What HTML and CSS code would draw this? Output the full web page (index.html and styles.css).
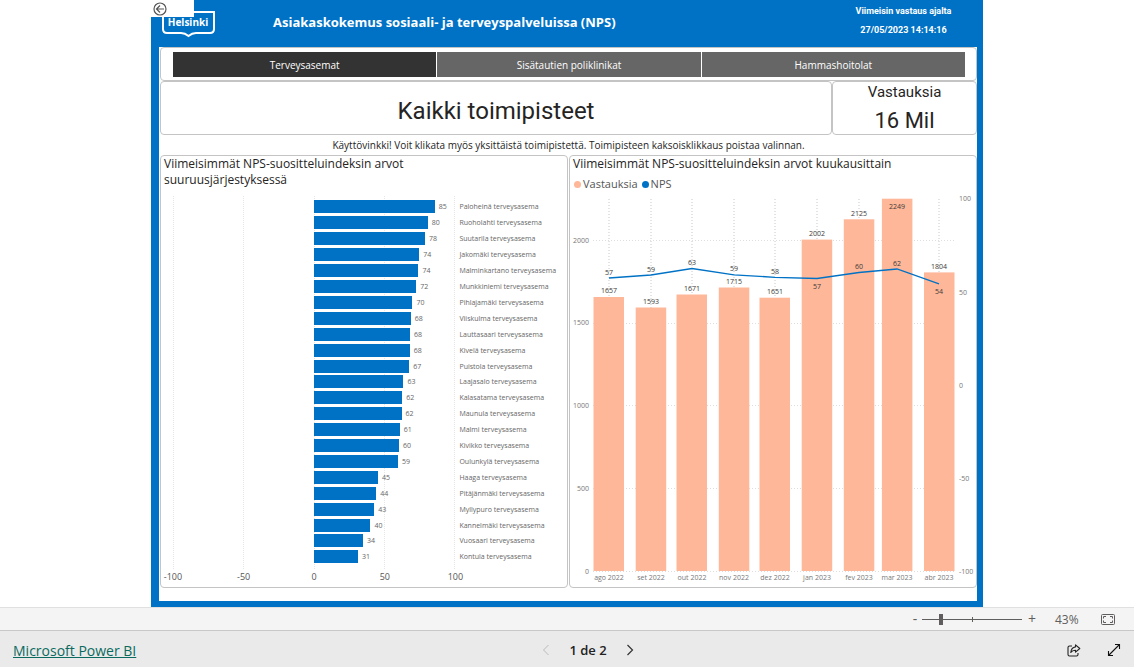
FILE: index.html
```html
<!DOCTYPE html>
<html lang="fi">
<head>
<meta charset="utf-8">
<title>Asiakaskokemus sosiaali- ja terveyspalveluissa (NPS)</title>
<link rel="stylesheet" href="styles.css">
</head>
<body>
<main class="stage">
  <article class="report">
    <header class="report-header">
      <div class="brand">
        <svg class="logo" width="56" height="28" viewBox="0 0 56 28" role="img" aria-label="Helsinki">
          <path d="M2 2H53V19Q53 23 49 23H35Q31 23 27.500 26Q24 23 20 23H6Q2 23 2 19Z" fill="none" stroke="#fff" stroke-width="2"/>
          <text x="27" y="16" class="logo-text">Helsinki</text>
        </svg>
        <button class="back" type="button" aria-label="Takaisin">
          <svg width="14" height="14" viewBox="0 0 14 14"><g fill="none" stroke="#555" stroke-width="1.200"><circle cx="7" cy="7" r="6"/><path d="M11 7H3.500M7 3.500L3.500 7L7 10.500"/></g></svg>
        </button>
      </div>
      <h1 class="report-title">Asiakaskokemus sosiaali- ja terveyspalveluissa (NPS)</h1>
      <div class="updated"><span>Viimeisin vastaus ajalta</span><span>27/05/2023 14:14:16</span></div>
    </header>
    <div class="page">
      <nav class="tabs card">
        <button class="tab tab-active" type="button">Terveysasemat</button>
        <button class="tab" type="button">Sisätautien poliklinikat</button>
        <button class="tab" type="button">Hammashoitolat</button>
      </nav>
      <div class="summary">
        <h2 class="card place">Kaikki toimipisteet</h2>
        <div class="card count"><span class="count-label">Vastauksia</span><span class="count-value">16 Mil</span></div>
      </div>
      <p class="hint">Käyttövinkki! Voit klikata myös yksittäistä toimipistettä. Toimipisteen kaksoisklikkaus poistaa valinnan.</p>
      <div class="charts">
        <section class="card chart">
          <h3 class="chart-title ranking-title">Viimeisimmät NPS-suositteluindeksin arvot suuruusjärjestyksessä</h3>
          <div class="ranking">
            <div class="grid-lines"><i></i><i></i><i></i><i></i><i></i></div>
            <ul class="rows">
              <li><span class="track"><b class="bar" style="width:85.300%"></b>85</span><span class="name">Paloheinä terveysasema</span></li>
              <li><span class="track"><b class="bar" style="width:80.400%"></b>80</span><span class="name">Ruoholahti terveysasema</span></li>
              <li><span class="track"><b class="bar" style="width:78.400%"></b>78</span><span class="name">Suutarila terveysasema</span></li>
              <li><span class="track"><b class="bar" style="width:74.400%"></b>74</span><span class="name">Jakomäki terveysasema</span></li>
              <li><span class="track"><b class="bar" style="width:73.800%"></b>74</span><span class="name">Malminkartano terveysasema</span></li>
              <li><span class="track"><b class="bar" style="width:72.300%"></b>72</span><span class="name">Munkkiniemi terveysasema</span></li>
              <li><span class="track"><b class="bar" style="width:69.600%"></b>70</span><span class="name">Pihlajamäki terveysasema</span></li>
              <li><span class="track"><b class="bar" style="width:68.400%"></b>68</span><span class="name">Viiskulma terveysasema</span></li>
              <li><span class="track"><b class="bar" style="width:67.900%"></b>68</span><span class="name">Lauttasaari terveysasema</span></li>
              <li><span class="track"><b class="bar" style="width:67.700%"></b>68</span><span class="name">Kivelä terveysasema</span></li>
              <li><span class="track"><b class="bar" style="width:67.300%"></b>67</span><span class="name">Puistola terveysasema</span></li>
              <li><span class="track"><b class="bar" style="width:63.200%"></b>63</span><span class="name">Laajasalo terveysasema</span></li>
              <li><span class="track"><b class="bar" style="width:62.400%"></b>62</span><span class="name">Kalasatama terveysasema</span></li>
              <li><span class="track"><b class="bar" style="width:61.900%"></b>62</span><span class="name">Maunula terveysasema</span></li>
              <li><span class="track"><b class="bar" style="width:60.600%"></b>61</span><span class="name">Malmi terveysasema</span></li>
              <li><span class="track"><b class="bar" style="width:60%"></b>60</span><span class="name">Kivikko terveysasema</span></li>
              <li><span class="track"><b class="bar" style="width:59.300%"></b>59</span><span class="name">Oulunkylä terveysasema</span></li>
              <li><span class="track"><b class="bar" style="width:45.200%"></b>45</span><span class="name">Haaga terveysasema</span></li>
              <li><span class="track"><b class="bar" style="width:44%"></b>44</span><span class="name">Pitäjänmäki terveysasema</span></li>
              <li><span class="track"><b class="bar" style="width:42.600%"></b>43</span><span class="name">Myllypuro terveysasema</span></li>
              <li><span class="track"><b class="bar" style="width:39.800%"></b>40</span><span class="name">Kannelmäki terveysasema</span></li>
              <li><span class="track"><b class="bar" style="width:34.500%"></b>34</span><span class="name">Vuosaari terveysasema</span></li>
              <li><span class="track"><b class="bar" style="width:31%"></b>31</span><span class="name">Kontula terveysasema</span></li>
            </ul>
            <div class="scale"><span>-100</span><span>-50</span><span>0</span><span>50</span><span>100</span></div>
          </div>
        </section>
        <section class="card chart">
          <h3 class="chart-title">Viimeisimmät NPS-suositteluindeksin arvot kuukausittain</h3>
          <div class="legend"><span class="key key-count">Vastauksia</span><span class="key key-nps">NPS</span></div>
          <svg class="monthly" viewBox="569 193 406 393" role="img" aria-label="Vastauksia ja NPS kuukausittain">
            <path class="month-lines" d="M608 199V571M650 199V571M691 199V571M733 199V571M774 199V571M816 199V571M858 199V571M896 199V571M938 199V571"/>
            <path class="value-lines" d="M592 240.500H954M592 323.500H954M592 405.500H954M592 488.500H954M592 571.500H954"/>
            <g class="columns">
              <rect x="592.500" y="297" width="30.500" height="274"/>
              <rect x="634.700" y="307.500" width="30.500" height="263.500"/>
              <rect x="675.500" y="294.500" width="30.500" height="276.500"/>
              <rect x="717.800" y="287.500" width="30.500" height="283.500"/>
              <rect x="758.500" y="297.700" width="30.500" height="273.300"/>
              <rect x="800.700" y="239.600" width="30.500" height="331.400"/>
              <rect x="842.800" y="219.300" width="30.500" height="351.700"/>
              <rect x="880.900" y="198.700" width="30.500" height="372.300"/>
              <rect x="923" y="272.400" width="30.500" height="298.600"/>
            </g>
            <polyline class="nps-line" points="608,278 650,275 691,268.500 733,274.800 774,277.300 816,278.500 858,272.500 896,269 938,283.800"/>
            <g class="data-labels">
              <text x="608" y="293">1657</text><text x="650" y="304">1593</text><text x="691" y="291">1671</text>
              <text x="733" y="284">1715</text><text x="774" y="294">1651</text><text x="816" y="236">2002</text>
              <text x="858" y="216">2125</text><text x="896" y="209">2249</text><text x="938" y="269">1804</text>
              <text x="608" y="275">57</text><text x="650" y="272">59</text><text x="691" y="265">63</text>
              <text x="733" y="271">59</text><text x="774" y="274">58</text><text x="816" y="289">57</text>
              <text x="858" y="269">60</text><text x="896" y="266">62</text><text x="938" y="294">54</text>
            </g>
            <g class="month-labels">
              <text x="608" y="580">ago 2022</text><text x="650" y="580">set 2022</text><text x="691" y="580">out 2022</text>
              <text x="733" y="580">nov 2022</text><text x="774" y="580">dez 2022</text><text x="816" y="580">jan 2023</text>
              <text x="858" y="580">fev 2023</text><text x="896" y="580">mar 2023</text><text x="938" y="580">abr 2023</text>
            </g>
            <g class="count-axis">
              <text x="588" y="243">2000</text><text x="588" y="325">1500</text><text x="588" y="408">1000</text>
              <text x="588" y="491">500</text><text x="588" y="574">0</text>
            </g>
            <g class="nps-axis">
              <text x="958" y="201">100</text><text x="958" y="295">50</text><text x="958" y="388">0</text>
              <text x="958" y="481">-50</text><text x="958" y="574">-100</text>
            </g>
          </svg>
        </section>
      </div>
    </div>
  </article>
</main>
<div class="zoom-bar">
  <button class="zoom-step" type="button" aria-label="Reduzir">-</button>
  <input class="zoom-range" type="range" min="0" max="100" value="18" aria-label="Zoom">
  <button class="zoom-step" type="button" aria-label="Ampliar">+</button>
  <span class="zoom-value">43%</span>
  <button class="icon-button fit" type="button" aria-label="Ajustar à página">
    <svg width="14" height="11" viewBox="0 0 14 11" fill="none" stroke="#605e5c"><rect x=".500" y=".500" width="13" height="10" rx="1"/><path d="M5 2.500H2.500V4.500M9 2.500H11.500V4.500M5 8.500H2.500V6.500M9 8.500H11.500V6.500"/></svg>
  </button>
</div>
<footer class="footer">
  <a class="powered" href="#">Microsoft Power BI</a>
  <div class="pager">
    <button class="icon-button" type="button" disabled aria-label="Página anterior"><svg width="8" height="12" viewBox="0 0 8 12" fill="none" stroke="#bbb"><path d="M6.500 1L1.500 6L6.500 11"/></svg></button>
    <span class="page-number">1 de 2</span>
    <button class="icon-button" type="button" aria-label="Próxima página"><svg width="8" height="12" viewBox="0 0 8 12" fill="none" stroke="#333" stroke-width="1.200"><path d="M1.500 1L6.500 6L1.500 11"/></svg></button>
  </div>
  <div class="actions">
    <button class="icon-button" type="button" aria-label="Compartilhar"><svg width="14" height="13" viewBox="0 0 14 13" fill="none" stroke="#222" stroke-width="1.100" stroke-linejoin="round"><path d="M5 2H2.500Q1 2 1 3.500V10.500Q1 12 2.500 12H9.500Q11 12 11 10.500V9"/><path d="M8.500 .800L12.800 4.500L8.500 8.200V6.200Q5.500 6 3.800 8.500Q4.300 3.500 8.500 2.900Z"/></svg></button>
    <button class="icon-button" type="button" aria-label="Tela inteira"><svg width="14" height="14" viewBox="0 0 14 14" fill="none" stroke="#111" stroke-width="1.100"><path d="M1.500 12.500L12.500 1.500M8 1.500H12.500V6M1.500 8V12.500H6"/></svg></button>
  </div>
</footer>
</body>
</html>
```
FILE: styles.css
```css
* { box-sizing: border-box; }
body {
  margin: 0;
  height: 100vh;
  display: flex;
  flex-direction: column;
  background: #fff;
  color: #252423;
  font-family: "Open Sans", "Noto Sans", sans-serif;
}
h1, h2, h3, p, ul { margin: 0; padding: 0; font-weight: 400; }
button { border: 0; padding: 0; background: none; font: inherit; color: inherit; }

.stage { flex: 1; min-height: 0; display: flex; justify-content: center; }
.report {
  height: 100%;
  max-width: 100%;
  aspect-ratio: 832 / 607;
  display: flex;
  flex-direction: column;
  padding: 0 6px 6px 8px;
  background: #0072c6;
}
.report-header { height: 47px; display: flex; color: #fff; }
.brand { position: relative; width: 114px; padding: 10px 0 0 2px; }
.logo { display: block; }
.logo-text { font: 700 10px "Open Sans", sans-serif; fill: #fff; text-anchor: middle; }
.back {
  position: absolute;
  left: -8px;
  top: 0;
  width: 43px;
  height: 17px;
  padding: 2px;
  display: flex;
  background: #fff;
}
.report-title { flex: 1; font-size: 13px; line-height: 44px; font-weight: 700; }
.updated {
  width: 147px;
  padding-top: 2px;
  display: flex;
  flex-direction: column;
  align-items: center;
  font: 700 9px/19px Roboto, sans-serif;
}

.page {
  flex: 1;
  min-height: 0;
  display: flex;
  flex-direction: column;
  padding: 0 0 13px 1px;
  background: #fff;
}
.card { border: 1px solid #c4c4c4; border-radius: 4px; background: #fff; }
.tabs { height: 34px; display: flex; padding: 4px 11px 3px 12px; gap: 1px; }
.tab { flex: 1; background: #666; color: #fff; font-size: 10px; }
.tab-active { background: #333; }
.summary { display: flex; height: 54px; }
.place {
  flex: 1;
  text-align: center;
  font: 24px/58px Roboto, sans-serif;
}
.count {
  width: 145px;
  display: flex;
  flex-direction: column;
  align-items: center;
  font-family: Roboto, sans-serif;
}
.count-label { font-size: 15px; line-height: 20px; }
.count-value { font-size: 22px; line-height: 38px; }
.hint { text-align: center; font-size: 10px; line-height: 20px; }
.charts {
  flex: 1;
  min-height: 0;
  display: grid;
  grid-template-columns: 1fr 1fr;
  gap: 1px;
}
.chart { display: flex; flex-direction: column; min-width: 0; min-height: 0; }
.chart-title { padding-left: 3px; font-size: 12px; line-height: 16px; }
.ranking-title { width: 270px; }

.ranking {
  flex: 1;
  min-height: 0;
  margin: 8px 0 2px 12px;
  display: grid;
  grid-template-columns: 281fr 111fr;
  grid-template-rows: 1fr 16px;
}
.grid-lines {
  grid-area: 1 / 1;
  display: flex;
  justify-content: space-between;
}
.grid-lines i { width: 0; border-left: 1px dotted #e6e6e6; }
.rows {
  grid-area: 1 / 1 / 2 / 3;
  display: flex;
  flex-direction: column;
  padding: 3px 0 4px;
  list-style: none;
  color: #666;
  font-size: 7px;
}
.rows li {
  flex: 1;
  min-height: 0;
  display: grid;
  grid-template-columns: 281fr 281fr 222fr;
  align-items: center;
}
.track { grid-column: 2; display: flex; align-items: center; gap: 4px; }
.bar { height: 13px; background: #0072c6; }
.name { padding-left: 4px; white-space: nowrap; }
.scale {
  grid-area: 2 / 1;
  display: flex;
  justify-content: space-between;
  font-size: 9px;
  line-height: 16px;
  color: #555;
}
.scale span { width: 0; display: flex; justify-content: center; }

.legend {
  display: flex;
  gap: 4px;
  padding: 4px 0 0 4px;
  font-size: 11px;
  line-height: 16px;
  color: #555;
}
.key { display: flex; align-items: center; gap: 2px; }
.key::before { content: ""; width: 7px; height: 7px; border-radius: 50%; }
.key-count::before { background: #feb798; }
.key-nps::before { background: #0072c6; }
.monthly {
  flex: 1;
  min-height: 0;
  width: 100%;
  font-size: 7px;
}
.month-lines { stroke: #c8c8c8; stroke-dasharray: 1 2; fill: none; }
.value-lines { stroke: #dedede; stroke-dasharray: 1 2; fill: none; }
.columns { fill: #feb798; }
.nps-line { fill: none; stroke: #0072c6; stroke-width: 1.3; }
.data-labels { fill: #3c3a39; text-anchor: middle; }
.month-labels { fill: #777; text-anchor: middle; }
.count-axis { fill: #777; text-anchor: end; }
.nps-axis { fill: #777; }

.zoom-bar {
  height: 23px;
  display: flex;
  align-items: center;
  justify-content: flex-end;
  padding-right: 19px;
  border-top: 1px solid #e0e0e0;
  background: #f4f4f4;
  color: #605e5c;
  font-size: 12px;
}
.zoom-step { width: 14px; font-size: 14px; line-height: 20px; }
.zoom-range {
  appearance: none;
  width: 100px;
  height: 12px;
  margin: 0 3px 0 0;
  background:
    linear-gradient(#605e5c, #605e5c) center / 100% 1px no-repeat,
    linear-gradient(#605e5c, #605e5c) center / 1px 5px no-repeat;
}
.zoom-range::-webkit-slider-thumb {
  appearance: none;
  width: 4px;
  height: 11px;
  background: #605e5c;
}
.zoom-value { width: 62px; padding-left: 16px; }
.icon-button { display: flex; }

.footer {
  height: 37px;
  display: grid;
  grid-template-columns: 1fr auto 1fr;
  align-items: center;
  padding: 2px 13px 0;
  border-top: 1px solid #c8c8c8;
  background: #eaeaea;
}
.powered { justify-self: start; color: #0b6a5f; font-size: 14px; }
.pager { display: flex; align-items: center; gap: 19px; margin-left: 42px; }
.page-number { font-size: 13px; font-weight: 600; color: #222; }
.actions { display: flex; align-items: center; justify-content: flex-end; gap: 26px; }
```
